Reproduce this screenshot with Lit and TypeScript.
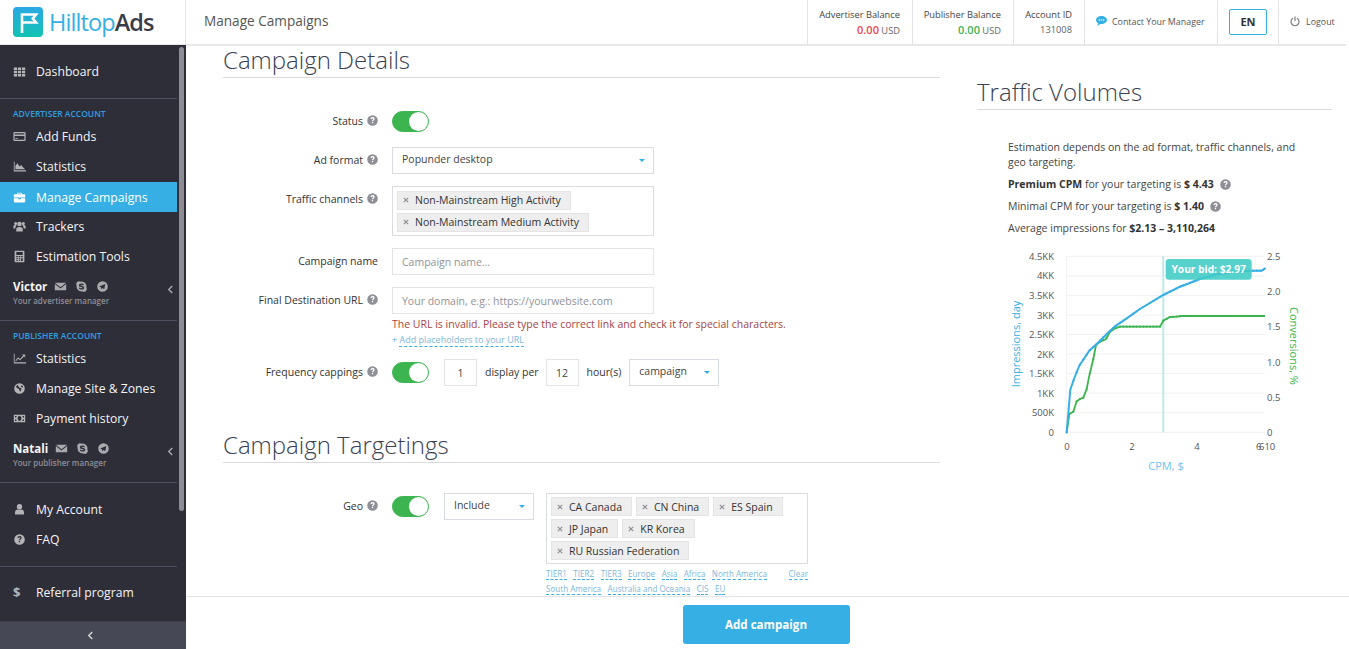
import { LitElement, html, css, svg } from "lit";
import { customElement } from "lit/decorators.js";

const ICONS: Record<string, any> = {
  grid: svg`<path d="M1 3h4v3H1zM6 3h4v3H6zM11 3h4v3h-4zM1 7h4v3H1zM6 7h4v3H6zM11 7h4v3h-4zM1 11h4v3H1zM6 11h4v3H6zM11 11h4v3h-4z"/>`,
  card: svg`<path fill-rule="evenodd" d="M2 2.500h12a1.500 1.500 0 0 1 1.500 1.500v8a1.500 1.500 0 0 1-1.500 1.500H2A1.500 1.500 0 0 1 .5 12V4A1.500 1.500 0 0 1 2 2.500zM2 4v1.500h12V4zM2 7.500V12h12V7.500zM3 10h3v1H3z"/>`,
  area: svg`<path d="M1 2h1v10.500h14V14H1z"/><path d="M3 11.500V7l2.500-3 2.500 4 2-2 2 2.500 3 3z"/>`,
  case: svg`<path fill-rule="evenodd" d="M5 4V3a1 1 0 0 1 1-1h4a1 1 0 0 1 1 1v1h3a1 1 0 0 1 1 1v3H1V5a1 1 0 0 1 1-1zM6 3v1h4V3z"/><path d="M1 9h5.500v1h3V9H15v4a1 1 0 0 1-1 1H2a1 1 0 0 1-1-1z"/>`,
  users: svg`<circle cx="8" cy="5" r="2.800"/><circle cx="3.300" cy="4.300" r="1.900"/><circle cx="12.700" cy="4.300" r="1.900"/><path d="M4 14v-2.800C4 9.500 5.500 8.500 8 8.500s4 1 4 2.700V14z"/><path d="M.5 10.500V8c0-1 1-1.700 2.800-1.700.5 0 .9.100 1.200.2-.6.500-1.500 1.500-1.700 4zM15.500 10.500V8c0-1-1-1.700-2.800-1.700-.5 0-.9.100-1.200.2.600.500 1.500 1.500 1.700 4z"/>`,
  calc: svg`<path fill-rule="evenodd" d="M3 1h10a1 1 0 0 1 1 1v12a1 1 0 0 1-1 1H3a1 1 0 0 1-1-1V2a1 1 0 0 1 1-1zM4 2.500V6h8V2.500zM4 7.500v1.500h2V7.500zM7 7.500v1.500h2V7.500zM10 7.500v1.500h2V7.500zM4 10v1.500h2V10zM7 10v1.500h2V10zM10 10v3.500h2V10zM4 12.500v1h2v-1zM7 12.500v1h2v-1z"/>`,
  line: svg`<path d="M1 2h1v10.500h14V14H1z"/><path d="M3 10.500l3.200-4 2.500 2L12.500 4 11 3h4v4l-1.300-1.700-5 5-2.500-2-2.500 3z"/>`,
  globe: svg`<path fill-rule="evenodd" d="M8 1.500a6.500 6.500 0 1 1 0 13 6.500 6.500 0 0 1 0-13zM6 3.500C5 4 4 5 3.800 6.500l2 1.500 1.500.3.500 2 1 1.700 1-1.500.5-2.500L8.500 7 7 6.200zM11 4l-1.500 1 1 1.500 2 .2C12.300 5.500 11.800 4.700 11 4z"/>`,
  money: svg`<path fill-rule="evenodd" d="M1 3.500h14v9H1zM4.500 5H2.500v2a2 2 0 0 0 2-2zM11.500 5a2 2 0 0 0 2 2V5zM2.500 9v2h2a2 2 0 0 0-2-2zM13.500 9a2 2 0 0 0-2 2h2zM8 5a2.400 3 0 1 0 0 6 2.400 3 0 0 0 0-6z"/>`,
  user: svg`<circle cx="8" cy="4.500" r="3.300"/><path d="M2.500 14v-2.500C2.500 9.300 4 8 5.700 8h4.600c1.700 0 3.200 1.300 3.200 3.500V14z"/>`,
  help: svg`<path fill-rule="evenodd" d="M8 1.500a6.500 6.500 0 1 1 0 13 6.500 6.500 0 0 1 0-13zM5.600 6.300h1.700c0-.6.300-1 .8-1s.8.300.8.700c0 .9-1.700 1.100-1.700 3h1.600c0-1.100 1.800-1.300 1.800-3.100 0-1.300-1.100-2.100-2.500-2.100-1.500 0-2.500 1-2.500 2.500zM7.200 9.900v1.600h1.600V9.900z"/>`,
  mail: svg`<path d="M1 3.500h14L8 9zM1 5l7 5.500L15 5v7.500H1z"/>`,
  skype: svg`<path fill-rule="evenodd" d="M8 1.800a6.200 6.200 0 0 1 6.100 7.300 3.600 3.600 0 0 1-4.900 4.900A6.200 6.200 0 0 1 1.900 6.900 3.600 3.600 0 0 1 6.800 2c.4-.1.800-.2 1.200-.2zM8 4.200c-2 0-3.200.9-3.200 2.200 0 2.600 4.500 1.800 4.500 3.100 0 .5-.6.800-1.300.8-1.400 0-1.500-1.200-2.400-1.200-.5 0-.9.300-.9.800 0 1 1.500 1.900 3.300 1.900 2.100 0 3.300-1 3.300-2.400 0-2.700-4.500-2-4.500-3 0-.4.400-.7 1.100-.7 1.200 0 1.300.9 2.100.9.500 0 .9-.3.900-.8 0-.9-1.500-1.600-2.900-1.600z"/>`,
  tg: svg`<path fill-rule="evenodd" d="M8 1.500a6.500 6.500 0 1 1 0 13 6.500 6.500 0 0 1 0-13zM11.500 5L3.800 8l2.200.8.8 2.600 1.300-1.500 2 1.500z"/>`,
};

const icon = (name: string, cls = "ico") =>
  html`<svg class=${cls} viewBox="0 0 16 16" fill="currentColor" aria-hidden="true">${ICONS[name]}</svg>`;

const help = html`<svg class="help" viewBox="0 0 16 16" fill="currentColor" aria-hidden="true">${ICONS.help}</svg>`;

const chev = html`<svg class="chev" viewBox="0 0 8 10" aria-hidden="true"><path d="M6 1L2 5l4 4" fill="none" stroke="currentColor" stroke-width="1.600"/></svg>`;

const caret = html`<svg class="caret" viewBox="0 0 8 4" aria-hidden="true"><path d="M0 0h8L4 4z" fill="#36afe4"/></svg>`;

const BLUE = [[200,580],[211,452],[222,420],[238,380],[250,362],[268,335],[290,315],[320,285],[345,262],[380,238],[420,210],[490,168],[540,143],[600,120],[650,106],[700,98],[760,95],[785,95],[797,87]];
const GREEN = [[200,580],[208,525],[220,518],[230,487],[240,480],[250,476],[260,450],[268,410],[280,360],[288,318],[300,308],[318,300],[330,278],[345,268],[360,263],[480,263],[490,245],[510,234],[530,233],[545,231],[795,231]];
const pts = (a: number[][]) => a.map(([x, y]) => `${(x / 3).toFixed(1)},${(y / 3).toFixed(1)}`).join(" ");

// marker dots, spaced evenly in x along a polyline
const dots = (a: number[][], step = 10) => {
  const out: number[][] = [];
  for (let x = a[0][0]; x <= a[a.length - 1][0]; x += step) {
    const i = a.findIndex((p, k) => k > 0 && x <= p[0]);
    const [x0, y0] = a[Math.max(i - 1, 0)];
    const [x1, y1] = a[Math.max(i, 0)];
    const t = x1 === x0 ? 0 : (x - x0) / (x1 - x0);
    out.push([x / 3, (y0 + (y1 - y0) * t) / 3]);
  }
  return out;
};

const LEFT_TICKS = ["4.5KK","4KK","3.5KK","3KK","2.5KK","2KK","1.5KK","1KK","500K","0"];
const RIGHT_TICKS: [string, number][] = [["2.5",17],["2.0",52],["1.5",87.500],["1.0",123],["0.5",158],["0",193]];

@customElement("app-root")
export class AppRoot extends LitElement {
  static styles = css`
    :host { display: block; width: 100%; height: 649px; overflow: hidden; font-family: "Open Sans", sans-serif; color: #333; background: #fff; }
    .page { display: flex; height: 649px; }
    /* sidebar */
    .side { width: 186px; flex: none; display: flex; flex-direction: column; position: relative; }
    .logo { height: 45px; box-sizing: border-box; border-right: 1px solid #e4e4e8; border-bottom: 1px solid #e8e8ea; display: flex; align-items: center; padding-left: 13px; gap: 7px; }
    .logo svg { width: 30px; height: 30px; flex: none; }
    .logo-t { font-size: 23.500px; line-height: 30px; font-weight: 500; letter-spacing: -0.9px; color: #36afe4; margin-left: -1px; }
    .logo-t b { font-weight: 600; color: #3a3b47; }
    .dark { flex: 1; background: #2e2e38; display: flex; flex-direction: column; padding-top: 11px; position: relative; min-height: 0; }
    .item { height: 30px; width: 177px; display: flex; align-items: center; color: #f4f4f6; font-size: 12.200px; padding-left: 13px; box-sizing: border-box; }
    .item.on { background: #36afe4; color: #fff; margin-top: 1px; margin-bottom: -1px; }
    .item.on .ico { color: #fff; }
    .ico { width: 13px; height: 13px; color: #b4b4b8; flex: none; margin-right: 10px; }
    .dollar { width: 13px; margin-right: 10px; color: #b4b4b8; font-weight: 700; font-size: 13px; flex: none; }
    .div { height: 1px; width: 177px; background: #4e4e60; flex: none; }
    .sect { height: 14px; line-height: 14px; margin-top: 8px; padding-left: 13px; font-size: 8.500px; font-weight: 600; color: #2f9fe0; white-space: nowrap; }
    .mgr { width: 177px; height: 49px; box-sizing: border-box; padding: 7px 0 0 13px; position: relative; }
    .mgr-top { display: flex; align-items: center; height: 16px; gap: 8px; color: #f4f4f6; font-size: 11.500px; font-weight: 700; }
    .mgr-top svg.m { width: 13px; height: 13px; color: #a9a9ae; flex: none; }
    .mgr-top svg.m:first-of-type { margin-left: -1px; }
    .mgr-sub { font-size: 8px; font-weight: 600; color: #8f8f96; line-height: 14px; }
    .chev { width: 7px; height: 9px; color: #a9a9ae; }
    .mgr .chev { position: absolute; right: 3px; top: 14px; }
    .bottom { position: absolute; left: 0; right: 0; bottom: 0; height: 28px; background: #474855; border-top: 1px solid #3d3e49; box-sizing: border-box; display: flex; align-items: center; justify-content: center; }
    .bottom .chev { color: #d8d8dc; margin-left: -5px; }
    .thumb { position: absolute; left: 179px; top: 2px; width: 5px; height: 464px; border-radius: 3px; background: #8d8d93; }
    /* main */
    .main { flex: 1; min-width: 0; display: flex; flex-direction: column; }
    .top { height: 46px; flex: none; width: 1160px; box-sizing: border-box; border-bottom: 2px solid #e9e9ec; display: flex; align-items: stretch; position: relative; z-index: 1; background: #fff; }
    .title { flex: 1; display: flex; align-items: center; padding-left: 18px; font-size: 13.600px; color: #555; padding-bottom: 3px; }
    .cell { border-left: 1px solid #e4e4e8; box-sizing: border-box; display: flex; flex-direction: column; justify-content: center; align-items: flex-end; padding-right: 12px; font-size: 9.300px; color: #444; }
    .cell.adv { width: 105px; }
    .cell.pub { width: 101px; }
    .cell.acc { width: 71px; }
    .cell .l1 { line-height: 14px; padding-top: 1px; }
    .cell .l2 { line-height: 15px; color: #666; }
    .red { color: #f2444a; font-size: 11px; font-weight: 600; }
    .grn { color: #3cb44f; font-size: 11px; font-weight: 600; }
    .cell.act { flex-direction: row; align-items: center; justify-content: flex-start; padding: 0 0 2px 11px; gap: 5px; color: #555; white-space: nowrap; font-size: 8.900px; }
    .cell.con { width: 133px; }
    .cell.lang { width: 61px; padding: 0 0 1px; align-items: center; justify-content: center; }
    .en { width: 38px; height: 26px; box-sizing: border-box; border: 1px solid #36afe4; border-radius: 2px; font-size: 11px; font-weight: 700; color: #333; display: flex; align-items: center; justify-content: center; }
    .cell.out { width: 68px; gap: 6px; }
    .cell.act svg { flex: none; }
    .body { flex: 1; min-height: 0; display: flex; padding-left: 37px; gap: 37px; margin-top: -1px; }
    .left { width: 717px; flex: none; }
    .right { width: 355px; flex: none; padding-top: 32px; }
    h2 { margin: 0; font-size: 24px; line-height: 30px; padding-bottom: 2px; font-weight: 300; color: #3a4152; border-bottom: 1px solid #dcdce0; white-space: nowrap; }
    .form { display: flex; flex-direction: column; gap: 12px; margin-top: 30px; }
    .row { display: grid; grid-template-columns: 155px 1fr; column-gap: 14px; align-items: start; }
    .lab { line-height: 27px; height: 27px; font-size: 10.500px; color: #333; text-align: right; display: flex; justify-content: flex-end; align-items: flex-start; gap: 3px; white-space: nowrap; }
    .help { width: 13px; height: 13px; color: #8e8e96; flex: none; margin-top: 6px; margin-right: -1px; }
    .tog { width: 37px; height: 21px; box-sizing: border-box; border-radius: 11px; background: #3cb44f; border: 1px solid #3cb44f; display: flex; justify-content: flex-end; margin-top: 3px; flex: none; }
    .tog i { display: block; width: 19px; height: 19px; border-radius: 50%; background: #fff; }
    .box { width: 262px; box-sizing: border-box; border: 1px solid #d9dce4; background: #fff; font-size: 10.500px; color: #444; }
    .sel { height: 27px; display: flex; align-items: center; justify-content: space-between; padding: 0 8px 3px 9px; }
    .caret { width: 6px; height: 3px; flex: none; margin-top: 2px; }
    .inp { height: 27px; display: flex; align-items: center; padding: 0 9px; color: #8f9299; border-color: #e2e3e8; }
    .multi { display: flex; flex-wrap: wrap; padding: 4px 4px 3px; gap: 2.500px 4px; align-content: flex-start; }
    .multi.tc { height: 50px; }
    .chip { height: 19px; box-sizing: border-box; background: #eee; border: 1px solid #e4e4e6; display: flex; align-items: center; padding: 0 9px 1px 5px; font-size: 10.500px; color: #333; white-space: nowrap; }
    .chip svg { width: 6px; height: 6px; margin-right: 6px; color: #8f8f96; flex: none; }
    .err { color: #a94442; font-size: 10.500px; line-height: 14px; margin-top: 3px; white-space: nowrap; }
    .plus { font-size: 9px; line-height: 14px; margin-top: 2px; color: #36afe4; }
    .plus span, .lnk { border-bottom: 1px dashed #36afe4; color: #7db8dc; }
    .flow { display: flex; align-items: flex-start; }
    .mini { width: 33px; height: 27px; box-sizing: border-box; border: 1px solid #e2e3e8; display: flex; align-items: center; justify-content: center; font-size: 10.500px; color: #444; flex: none; }
    .txt { line-height: 26px; font-size: 10.500px; color: #333; white-space: nowrap; }
    .gap1 { margin-left: 15px; }
    .gap2 { margin: 0 7px 0 8px; }
    .gap3 { margin: 0 8px; }
    .s90 { width: 90px; flex: none; }
    .sec2 { margin-top: 44px; }
    .geobox { margin-left: 12px; width: 262px; }
    .multi.geo { height: 71px; padding-top: 3px; gap: 3px 4px; }
    .multi.geo .chip { padding-bottom: 0; }
    .links { font-size: 8.100px; line-height: 11px; margin-top: 4px; position: relative; }
    .lrow { display: flex; gap: 6.500px; height: 15px; }
    .lnk { height: 11px; white-space: nowrap; }
    .clear { position: absolute; right: 0; top: 0; }
    .info { margin-top: 30px; padding-left: 31px; font-size: 10.500px; color: #444; }
    .info p { margin: 0; line-height: 15px; width: 300px; }
    .info .g { margin-top: 7px; display: flex; align-items: center; gap: 5px; }
    .info .g .help { margin-top: 0; }
    .info b { color: #333; font-weight: 700; }
    .chart { display: block; width: 320px; height: 240px; margin: 2.500px 0 0 23px; }
    .chart text { font-family: "Open Sans", sans-serif; font-size: 9.500px; fill: #555; }
    .chart .bl { fill: #36afe4; font-size: 11px; }
    .chart .gr { fill: #3cb44f; font-size: 11px; }
    .chart .cp { fill: #6cc3ec; font-size: 11px; }
    .chart .tip { fill: #fff; font-size: 10.200px; font-weight: 700; }
    .foot { height: 53px; flex: none; border-top: 1px solid #e3e3e6; background: #fff; display: flex; justify-content: center; padding: 8px 3px 0 0; box-sizing: border-box; position: relative; }
    .add { width: 167px; height: 39px; box-sizing: border-box; padding-bottom: 1px; border-radius: 3px; background: #36afe4; color: #fff; font-size: 11.600px; font-weight: 700; display: flex; align-items: center; justify-content: center; }
  `;

  private x = html`<svg viewBox="0 0 6 6" aria-hidden="true"><path d="M.8.800l4.400 4.400M5.200.800L.8 5.200" stroke="currentColor" stroke-width="1.200"/></svg>`;

  private chip(t: string) {
    return html`<div class="chip">${this.x}${t}</div>`;
  }

  private item(ic: string, t: string, on = false) {
    return html`<div class="item ${on ? "on" : ""}">${icon(ic)}${t}</div>`;
  }

  private mgr(name: string, sub: string) {
    const m = (n: string) => html`<svg class="m" viewBox="0 0 16 16" fill="currentColor" aria-hidden="true">${ICONS[n]}</svg>`;
    return html`<div class="mgr"><div class="mgr-top">${name}${m("mail")}${m("skype")}${m("tg")}</div><div class="mgr-sub">${sub}</div>${chev}</div>`;
  }

  private renderSide() {
    return html`<div class="side">
      <div class="logo">
        <svg viewBox="0 0 30 30" aria-hidden="true">
          <defs><linearGradient id="lg" x1="0" y1="0" x2="0" y2="1"><stop offset="0" stop-color="#2aa9e4"/><stop offset="1" stop-color="#10c3b2"/></linearGradient></defs>
          <rect width="30" height="30" rx="4" fill="url(#lg)"/>
          <path d="M9 26V7.500H23L19.800 11.500L23 15.500H9" fill="none" stroke="#fff" stroke-width="2.600"/>
        </svg>
        <div class="logo-t">Hilltop<b>Ads</b></div>
      </div>
      <div class="dark">
        ${this.item("grid", "Dashboard")}
        <div class="div" style="margin-top:12px"></div>
        <div class="sect">ADVERTISER ACCOUNT</div>
        ${this.item("card", "Add Funds")}
        ${this.item("area", "Statistics")}
        ${this.item("case", "Manage Campaigns", true)}
        ${this.item("users", "Trackers")}
        ${this.item("calc", "Estimation Tools")}
        ${this.mgr("Victor", "Your advertiser manager")}
        <div class="div"></div>
        <div class="sect">PUBLISHER ACCOUNT</div>
        ${this.item("line", "Statistics")}
        ${this.item("globe", "Manage Site & Zones")}
        ${this.item("money", "Payment history")}
        ${this.mgr("Natali", "Your publisher manager")}
        <div class="div"></div>
        <div style="height:11px"></div>
        ${this.item("user", "My Account")}
        ${this.item("help", "FAQ")}
        <div class="div" style="margin-top:12px"></div>
        <div style="height:10px"></div>
        <div class="item"><span class="dollar">$</span>Referral program</div>
        <div class="thumb"></div>
        <div class="bottom">${chev}</div>
      </div>
    </div>`;
  }

  private renderTop() {
    return html`<div class="top">
      <div class="title">Manage Campaigns</div>
      <div class="cell adv"><div class="l1">Advertiser Balance</div><div class="l2"><span class="red">0.00</span> USD</div></div>
      <div class="cell pub"><div class="l1">Publisher Balance</div><div class="l2"><span class="grn">0.00</span> USD</div></div>
      <div class="cell acc"><div class="l1">Account ID</div><div class="l2">131008</div></div>
      <div class="cell act con">
        <svg width="11" height="10" viewBox="0 0 11 10" aria-hidden="true"><path d="M5.500 0C8.500 0 11 1.800 11 4s-2.500 4-5.500 4c-.5 0-1 0-1.400-.1L1.500 10l.5-3C.8 6.300 0 5.200 0 4c0-2.200 2.500-4 5.500-4z" fill="#36afe4"/><circle cx="3.300" cy="4" r=".8" fill="#fff"/><circle cx="5.500" cy="4" r=".8" fill="#fff"/><circle cx="7.700" cy="4" r=".8" fill="#fff"/></svg>
        Contact Your Manager
      </div>
      <div class="cell lang"><div class="en">EN</div></div>
      <div class="cell act out">
        <svg width="10" height="11" viewBox="0 0 10 11" aria-hidden="true"><path d="M3 2.200a4 4 0 1 0 4 0" fill="none" stroke="#888" stroke-width="1.300"/><path d="M5 .5v4.500" stroke="#888" stroke-width="1.300"/></svg>
        Logout
      </div>
    </div>`;
  }

  private renderLeft() {
    const tog = html`<div class="tog"><i></i></div>`;
    const links = (a: string[]) => a.map((t) => html`<span class="lnk">${t}</span>`);
    return html`<div class="left">
      <h2>Campaign Details</h2>
      <div class="form">
        <div class="row"><div class="lab">Status ${help}</div><div>${tog}</div></div>
        <div class="row"><div class="lab">Ad format ${help}</div><div class="box sel">Popunder desktop ${caret}</div></div>
        <div class="row"><div class="lab">Traffic channels ${help}</div><div class="box multi tc">${this.chip("Non-Mainstream High Activity")}${this.chip("Non-Mainstream Medium Activity")}</div></div>
        <div class="row"><div class="lab">Campaign name</div><div class="box inp">Campaign name...</div></div>
        <div class="row"><div class="lab">Final Destination URL ${help}</div><div>
          <div class="box inp">Your domain, e.g.: https://yourwebsite.com</div>
          <div class="err">The URL is invalid. Please type the correct link and check it for special characters.</div>
          <div class="plus">+ <span>Add placeholders to your URL</span></div>
        </div></div>
        <div class="row"><div class="lab">Frequency cappings ${help}</div><div class="flow">
          ${tog}<div class="mini gap1">1</div><div class="txt gap2">display per</div><div class="mini">12</div><div class="txt gap3">hour(s)</div>
          <div class="box sel s90">campaign ${caret}</div>
        </div></div>
      </div>
      <h2 class="sec2">Campaign Targetings</h2>
      <div class="form">
        <div class="row"><div class="lab">Geo ${help}</div><div class="flow">
          ${tog}<div class="box sel s90 gap1">Include ${caret}</div>
          <div class="geobox">
            <div class="box multi geo">${["CA Canada","CN China","ES Spain","JP Japan","KR Korea","RU Russian Federation"].map((t) => this.chip(t))}</div>
            <div class="links">
              <div class="lrow">${links(["TIER1","TIER2","TIER3","Europe","Asia","Africa","North America"])}</div>
              <div class="lrow">${links(["South America","Australia and Oceania","CIS","EU"])}</div>
              <span class="lnk clear">Clear</span>
            </div>
          </div>
        </div></div>
      </div>
    </div>`;
  }

  private renderChart() {
    const ys = [17.300, 36.900, 56.400, 76, 95.500, 115, 134.600, 154.100, 173.700, 193.300];
    const dot = (a: number[][], c: string) => dots(a).map(([x, y]) => svg`<circle cx=${x} cy=${y} r="1.100" fill=${c}/>`);
    return html`<svg class="chart" viewBox="0 0 320 240" role="img" aria-label="Traffic volumes chart">
      ${ys.map((y) => svg`<line x1="66.700" x2="265" y1=${y} y2=${y} stroke="#eff0f2" stroke-width="1"/>`)}
      <line x1="66.700" x2="66.700" y1="17" y2="193.300" stroke="#eff0f2"/>
      ${LEFT_TICKS.map((t, i) => svg`<text x="54" y=${ys[i] + 3.500} text-anchor="end">${t}</text>`)}
      ${RIGHT_TICKS.map(([t, y]) => svg`<text x="267" y=${y + 3.500}>${t}</text>`)}
      ${[["0",67],["2",132],["4",197]].map(([t, x]) => svg`<text x=${x} y="211" text-anchor="middle">${t}</text>`)}
      <text x="256" y="211">6</text><text x="259" y="211">610</text>
      <line x1="163.300" x2="163.300" y1="17" y2="193.300" stroke="#bfe9e7" stroke-width="2"/>
      <polyline points=${pts(GREEN)} fill="none" stroke="#3cb44f" stroke-width="1.800"/>
      ${dot(GREEN, "#3cb44f")}
      <polyline points=${pts(BLUE)} fill="none" stroke="#36afe4" stroke-width="2"/>
      ${dot(BLUE, "#36afe4")}
      <rect x="165.700" y="20" width="86" height="20.700" rx="3.500" fill="#3fcbc5" fill-opacity=".88"/>
      <text class="tip" x="208.700" y="34" text-anchor="middle">Your bid: $2.97</text>
      <text class="bl" transform="translate(19.500 105) rotate(-90)" text-anchor="middle">Impressions, day</text>
      <text class="gr" transform="translate(289.500 107) rotate(90)" text-anchor="middle">Conversions, %</text>
      <text class="cp" x="166" y="231" text-anchor="middle">CPM, $</text>
    </svg>`;
  }

  private renderRight() {
    return html`<div class="right">
      <h2>Traffic Volumes</h2>
      <div class="info">
        <p>Estimation depends on the ad format, traffic channels, and geo targeting.</p>
        <p class="g"><span><b>Premium CPM</b> for your targeting is <b>$ 4.43</b></span>${help}</p>
        <p class="g"><span>Minimal CPM for your targeting is <b>$ 1.40</b></span>${help}</p>
        <p class="g"><span>Average impressions for <b>$2.13 – 3,110,264</b></span></p>
      </div>
      ${this.renderChart()}
    </div>`;
  }

  render() {
    return html`<div class="page">
      ${this.renderSide()}
      <div class="main">
        ${this.renderTop()}
        <div class="body">${this.renderLeft()}${this.renderRight()}</div>
        <div class="foot"><div class="add">Add campaign</div></div>
      </div>
    </div>`;
  }
}
